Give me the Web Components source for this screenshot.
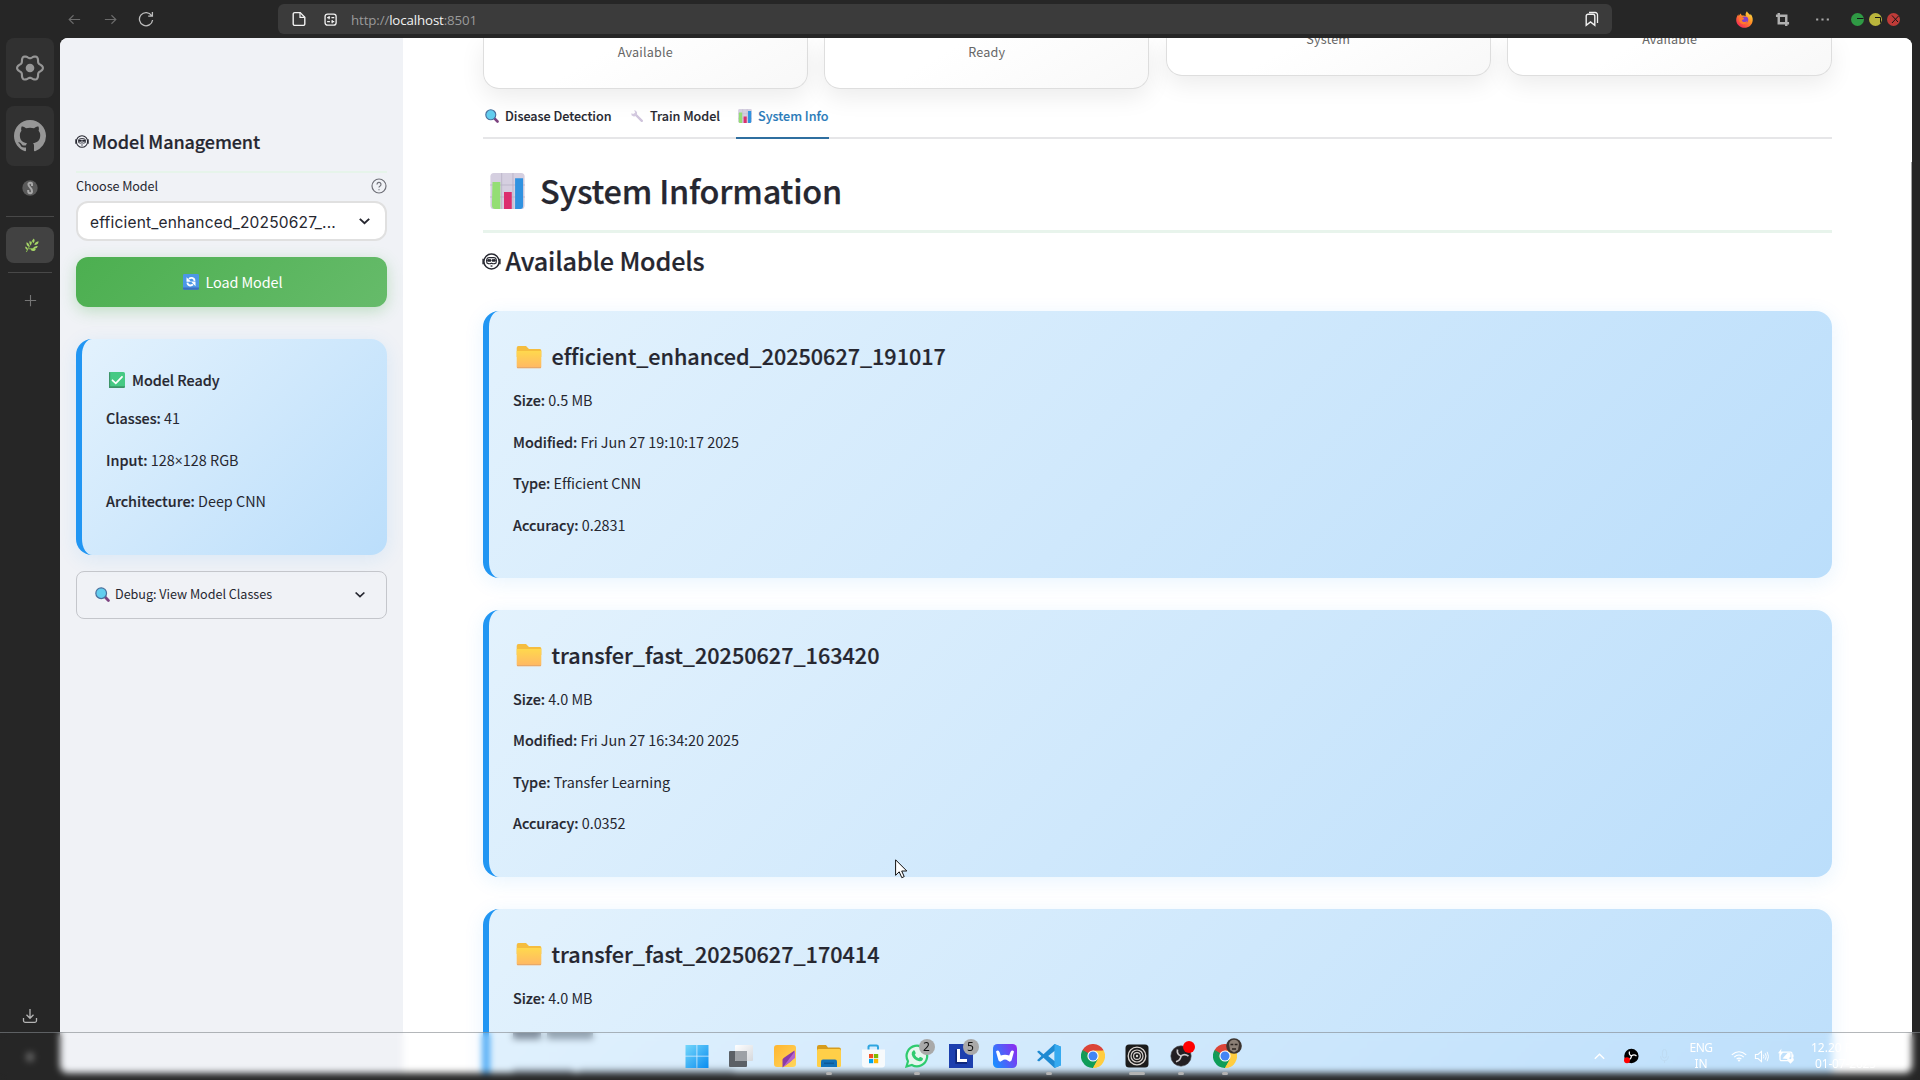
<!DOCTYPE html>
<html lang="en">
<head>
<meta charset="utf-8">
<title>Plant Disease Detection</title>
<style>
html,body{margin:0;height:100%;overflow:hidden;background:#262626}
body{font-family:"Noto Sans CJK SC","Noto Sans",sans-serif;color:#262730;width:1920px;height:1080px;position:relative}
</style>
</head>
<body>
<browser-window></browser-window>
<task-bar></task-bar>
<mouse-pointer></mouse-pointer>
<script>
/* Six-lobed outline of the settings gear. */
const gearPath = 'M' + Array.from({length:72},(_,i)=>{const t=i*Math.PI/36,r=12.1+1.7*Math.cos(6*t);return (16+r*Math.cos(t)).toFixed(2)+' '+(16+r*Math.sin(t)).toFixed(2)}).join('L') + 'z';
const ICONS = {
  back:['0 0 16 16','<path d="M14 8H2.5M7 3.5 2.3 8 7 12.5" fill="none" stroke="#6b6b6b" stroke-width="1.2"/>'],
  fwd:['0 0 16 16','<path d="M2 8h11.5M9 3.5 13.7 8 9 12.5" fill="none" stroke="#6b6b6b" stroke-width="1.2"/>'],
  reload:['0 0 16 16','<path d="M13.6 4.6A6.6 6.6 0 1 0 14.6 9M14.4 1v4.2h-4.2" fill="none" stroke="#bdbdbd" stroke-width="1.3"/>'],
  page:['0 0 16 16','<path d="M3.8 1.6h5.4l4.6 4.6v6.6a1.6 1.6 0 0 1-1.6 1.6H3.8a1.6 1.6 0 0 1-1.6-1.6V3.2a1.6 1.6 0 0 1 1.6-1.6z" fill="none" stroke="#f2f2f2" stroke-width="1.4"/><path d="M9 1.6v4.8h4.8" fill="none" stroke="#f2f2f2" stroke-width="1.2"/>'],
  site:['0 0 16 16','<rect x="2.2" y="2.2" width="11.8" height="11.8" rx="2.6" fill="none" stroke="#f2f2f2" stroke-width="1.4"/><path d="M4.4 6h3M9 6h3M4.4 10.200h3M9 10.200h3M6.500 4.300v3.400M9.800 8.500v3.400" stroke="#f2f2f2" stroke-width="1.300"/>'],
  mark:['0 0 16 16','<path d="M2.200 14.300V5a1.800 1.800 0 0 1 1.800-1.800h5A1.800 1.800 0 0 1 10.800 5v9.300L6.500 11z" fill="none" stroke="#f0f0f0" stroke-width="1.400"/><path d="M5 1.500h6.300a2.200 2.200 0 0 1 2.200 2.200V12" fill="none" stroke="#f0f0f0" stroke-width="1.300"/>'],
  crop:['0 0 16 16','<path d="M4 1v11h11M1 4h11v11" fill="none" stroke="#b0b0b0" stroke-width="2.600"/>'],
  dots:['0 0 16 16','<path d="M2 7h2v2H2zM7 7h2v2H7zM12 7h2v2h-2z" fill="#a8a8a8"/>'],
  fox:['0 0 16 16','<defs><linearGradient id="f" x1="1" y1="0" x2=".2" y2="1"><stop offset="0" stop-color="#fff14f"/><stop offset=".45" stop-color="#ff9324"/><stop offset="1" stop-color="#f5225a"/></linearGradient></defs><path d="M10.300.300c.300 1.300 2.200 2.300 3.200 3.700.200-.4.200-1 .1-1.400 1.500 1.600 2.400 4.200 2.100 6.500-.5 4-3.700 6.700-7.700 6.700S.3 12.600.2 8.700C.1 6.500 1 4.500 2.300 3l.2 1.700c.5-.5 1-1.900 2.200-2.400 0 .7.400 1.600 1 2 1.500-.3 2.500-.3 3.500.6C9 4 8.600 2 10.300.3z" fill="url(#f)"/><circle cx="8.400" cy="8.300" r="3.100" fill="#8440c8"/><path d="M3.300 6c2-.5 3.800.100 4.400 1.200-.3.900-1.600.800-2.200 1.400.5 2.300 3.800 2.500 5.200.3 0 3-4.300 4.700-6.500 2.400C3 10 2.700 7.700 3.300 6z" fill="#ff7a2c"/>'],
  gear:['0 0 32 32',`<path d="${gearPath}" fill="none" stroke="#969696" stroke-width="2.300" stroke-linejoin="round"/><circle cx="16" cy="16" r="4.600" fill="#969696"/>`],
  github:['0 0 16 16','<path fill="#969696" d="M8 0C3.580 0 0 3.580 0 8c0 3.540 2.290 6.530 5.470 7.590.4.070.55-.17.55-.38 0-.19-.01-.82-.01-1.490-2.010.370-2.530-.490-2.690-.940-.090-.230-.480-.940-.820-1.130-.280-.150-.680-.520-.010-.530.630-.010 1.080.580 1.230.820.720 1.210 1.870.870 2.330.660.070-.520.280-.870.510-1.070-1.780-.200-3.640-.890-3.640-3.950 0-.870.310-1.590.820-2.150-.080-.200-.360-1.020.080-2.120 0 0 .670-.210 2.200.820.640-.180 1.320-.270 2-.270s1.360.090 2 .270c1.530-1.040 2.200-.820 2.200-.820.440 1.100.160 1.920.080 2.120.510.560.820 1.270.820 2.150 0 3.070-1.870 3.750-3.650 3.950.290.250.540.730.540 1.480 0 1.070-.010 1.930-.010 2.200 0 .210.150.460.550.380A8.010 8.010 0 0 0 16 8c0-4.420-3.580-8-8-8z"/>'],
  coil:['0 0 16 16','<circle cx="8" cy="8" r="7.700" fill="#5a5a5a"/><path d="M10 6V4.200Q10 2.800 8.200 2.800T6.400 4.300Q6.400 6 8.200 7.500Q10 9.300 10 11.200T8.200 13.200Q6.200 13.200 6.200 11V10" fill="none" stroke="#a8a8a8" stroke-width="2"/>'],
  leaf:['0 0 16 16','<path d="M1.500 15C4 10 7 6 9.500 1.500M4.500 11.500Q9 12 13 9.800" fill="none" stroke="#8fc653" stroke-width="1"/><path d="M9.800.5q2.700 2.300-.5 5Q7.500 3 9.800.5zM15.500 3.500q0 4-4.800 4 .5-3.500 4.800-4zM14.500 8.500q-.6 3.500-5.500 2.800 1.500-3.300 5.500-2.800zM12.500 12.200q-2.500 3.300-6.300.3 3-2.200 6.300-.3zM1.800 4.500Q5.500 6 4.500 9.300 1 8 1.800 4.500zM5.500 3q2.800 2.200 1.300 4.800Q4 6 5.500 3zM.3 9q3 .8 2.800 3.800Q0 12 .3 9z" fill="#a6d667"/>'],
  plus:['0 0 16 16','<path d="M8 2v12M2 8h12" stroke="#757575" stroke-width="1.200"/>'],
  down:['0 0 16 16','<path d="M8 1v9M4.500 6.800 8 10.300l3.500-3.500M1.500 10v2.600a1.800 1.800 0 0 0 1.800 1.800h9.400a1.800 1.800 0 0 0 1.800-1.800V10" fill="none" stroke="#b4b4b4" stroke-width="1.300"/>'],
  help:['0 0 16 16','<circle cx="8" cy="8" r="7" fill="none" stroke="#6f7078" stroke-width="1.200"/><path d="M6 6.400a2 2 0 1 1 2.900 1.800c-.7.350-.9.600-.9 1.400M8 11.200v1.100" fill="none" stroke="#6f7078" stroke-width="1.200"/>'],
  chev:['0 0 16 16','<path d="M3 5.500 8 10.500l5-5" fill="none" stroke="#262730" stroke-width="2"/>'],
  face:['0 0 20 18','<circle cx="10" cy="9" r="8" fill="none" stroke="#262730" stroke-width="1.500"/><path d="M1.200 6v6M18.800 6v6" stroke="#262730" stroke-width="1.600"/><path d="M5.200 10.500Q3.800 5.200 7.500 4.900H12.500Q16.200 5.200 14.800 10.500Q12.300 12 10 10.800Q7.700 12 5.200 10.500z" fill="none" stroke="#262730" stroke-width="1.200"/><path d="M7.600 6.600a1.500 1.500 0 0 1 1.500 2.600H6.100a1.500 1.500 0 0 1 1.500-2.600zM12.400 6.600a1.500 1.500 0 0 1 1.500 2.600h-3a1.500 1.500 0 0 1 1.500-2.600z" fill="#262730"/><path d="M9 13.800h2" stroke="#262730" stroke-width="1.400"/>'],
  mag:['0 0 16 16','<path d="M10.500 10.500 14.300 14.300" stroke="#7d4380" stroke-width="3" stroke-linecap="round"/><circle cx="6.600" cy="6.600" r="5.700" fill="#62cdee" stroke="#4a6f9c" stroke-width="1.300"/>'],
  wrench:['0 0 16 16','<path d="M6 6l7.500 7.500" stroke="#cfc4dc" stroke-width="2.800" stroke-linecap="round"/><path d="M1.500 4.800Q1 7.500 3.500 8.300T8 6.500Q8.800 3.500 6.800 2L4.500 1.500 6 3.800 4.800 5.400 3 5.500z" fill="#d3c9df"/>'],
  chart:['0 0 18 18','<rect x=".2" y="0" width="17.600" height="18" rx="1.800" fill="#d5cfe0"/><path d="M6 0v18M11.800 0v18M0 6h18M0 12h18" stroke="#b6b0c4" stroke-width=".4"/><path d="M1.300 4.500h4V18h-2.600Q1 18 1 16z" fill="#94de74"/><path d="M7.200 9.500h4V18h-4z" fill="#dc2f6e"/><path d="M12.900 2.600H17V16.500Q17 18 15.600 18H12.900z" fill="#3092e0"/>'],
  sync:['0 0 16 16','<rect width="16" height="15.500" rx="1.200" fill="#4c97e6"/><path d="M0 13.500h16v1a1.200 1.200 0 0 1-1.200 1.200H1.200A1.200 1.200 0 0 1 0 14.500z" fill="#3d6fc0"/><path d="M3.500 3.200v4.600h4.600zM12.500 12.200V7.600H7.900z" fill="#fff"/><path d="M6 5Q7 3.800 9 3.900Q11.300 4.200 11.600 6.800M10 10.400Q9 11.600 7 11.500Q4.700 11.200 4.400 8.600" fill="none" stroke="#fff" stroke-width="1.800"/>'],
  check:['0 0 16 16','<rect width="16" height="16" rx="1.600" fill="#46c984"/><path d="M0 14.200h16v.4a1.400 1.400 0 0 1-1.400 1.400H1.400A1.400 1.400 0 0 1 0 14.600z" fill="#3d9468"/><rect width="1.200" height="16" rx=".6" fill="#3d9468"/><path d="M3.500 8.300 6.800 11.300 13 4.800" fill="none" stroke="#fff" stroke-width="1.800" stroke-linecap="round"/>'],
  folder:['0 0 26 24','<defs><linearGradient id="g" x1="0" y1="0" x2="0" y2="1"><stop offset="0" stop-color="#ffd84d"/><stop offset="1" stop-color="#ffb765"/></linearGradient></defs><path d="M.7 3Q.7 1 2.500 1H10L13 4H24Q25.300 4 25.300 5.500V12H.7z" fill="#f5bd3f"/><path d="M.7 6H25.300V21.800Q25.300 23.300 24 23.300H2Q.7 23.300.7 21.800z" fill="url(#g)"/><path d="M1 22.600h24" stroke="#e3a56a" stroke-width=".9"/>'],
  win:['0 0 24 24','<defs><linearGradient id="w" x1="0" y1="0" x2="1" y2="1"><stop offset="0" stop-color="#74d7fb"/><stop offset="1" stop-color="#0a8cf0"/></linearGradient></defs><path d="M.5 1h11v10.800H.5zM12.300 1h11.200v10.800H12.300zM.5 12.600h11V24H.5zM12.300 12.600h11.200V24H12.300z" fill="url(#w)"/>'],
  task:['0 0 24 24','<defs><linearGradient id="t" x1="0" y1="0" x2="1" y2="1"><stop offset="0" stop-color="#fff"/><stop offset="1" stop-color="#d5d8dc"/></linearGradient></defs><rect x="0" y="7" width="18" height="16" rx="1" fill="#5b6066"/><rect x="6" y="1" width="18" height="16" rx="1" fill="url(#t)"/><path d="M6 7h12v10H7a1 1 0 0 1-1-1z" fill="#9da1a6"/>'],
  note:['0 0 24 24','<defs><linearGradient id="n" x1="0" y1="0" x2="1" y2="1"><stop offset="0" stop-color="#ffb52f"/><stop offset="1" stop-color="#ffd65c"/></linearGradient></defs><rect x="1" y="1" width="22" height="22" rx="3" fill="url(#n)"/><path d="M21.500 6.500V10Q21 14.500 17 18L9.500 23.500V15.500Q10 14 12 13z" fill="#8a3ba8"/><path d="M22 7 10 23.200l12-9.200z" fill="#b565cc"/>'],
  files:['0 0 24 24','<path d="M0 3Q0 1 2 1H9L11 3.500H22Q24 3.500 24 5.500V12H0z" fill="#d79c1c"/><rect y="5" width="24" height="18" rx="1.500" fill="#ffcf48"/><path d="M4 23V17.500Q4 15.500 6 15.500H18Q20 15.500 20 17.500V23z" fill="#1272b8"/><path d="M7 18.500h10v1.600H7z" fill="#0d5a99"/>'],
  store:['0 0 24 24','<path d="M7.500 6V3Q7.500 1.600 9 1.600H15.500Q17 1.600 17 3V6" fill="none" stroke="#2ea5e0" stroke-width="2"/><path d="M1 5.500H24V20.500Q24 23.500 21 23.500H4Q1 23.500 1 20.500z" fill="#f7fafc"/><path d="M8 10h4.200v4.200H8z" fill="#f25022"/><path d="M13 10h4.200v4.200H13z" fill="#7fba00"/><path d="M8 15h4.200v4.200H8z" fill="#00a4ef"/><path d="M13 15h4.200v4.200H13z" fill="#ffb900"/>'],
  whats:['0 0 24 24','<path d="M1.500 22.500 3 17.200A10.300 10.300 0 1 1 6.900 21z" fill="#e6f6ee" stroke="#2fcb6f" stroke-width="2.200"/><path d="M8.300 6.500q1.200-.6 1.700.8l.7 1.600q.2.700-.9 1.800 1.300 2.600 3.900 3.600 1.200-1.600 1.900-1.200l2 1q.8.600 0 1.800-1.300 1.800-3.500 1.300Q8 15.500 6.700 10.500 6.300 8 8.300 6.500z" fill="#2fcb6f"/>'],
  lex:['0 0 24 24','<path d="M0 0h24v24H0z" fill="#1c3fae"/><path d="M8 5.500V18H18" fill="none" stroke="#0d2577" stroke-width="3.400"/><path d="M9.500 5V16.500H18" fill="none" stroke="#fff" stroke-width="3"/>'],
  bear:['0 0 24 24','<defs><linearGradient id="b" x1="0" y1=".7" x2="1" y2=".2"><stop offset="0" stop-color="#1d8cff"/><stop offset="1" stop-color="#8a2cf0"/></linearGradient></defs><rect width="24" height="24" rx="4.500" fill="url(#b)"/><path d="M3 7.500Q5 5.500 6.500 8l1.300 3.500Q12 9.800 16.200 11.500L17.500 8Q19 5.500 21 7.500L18.500 16.500Q17 18.600 15 16.800Q12 14 9 16.800Q7 18.600 5.500 16.500z" fill="#fff"/>'],
  code:['0 0 24 24','<path d="M17.500 0 24 2.800V21.200L17.500 24 6.500 13.800 2 17.500 0 16.300 4.400 12 0 7.700 2 6.500 6.500 10.200zM17.800 6.800 11.200 12l6.600 5.200z" fill="#1f8ad2" fill-rule="evenodd"/><path d="M17.500 0 24 2.800V21.200L17.500 24z" fill="#35aaf0"/>'],
  chrome:['0 0 24 24','<path d="M12 12 1.600 6A12 12 0 0 1 22.400 6z" fill="#db4437"/><path d="M12 12 22.400 6A12 12 0 0 1 12 24z" fill="#ffcd40"/><path d="M12 12V24A12 12 0 0 1 1.600 6z" fill="#0f9d58"/><path d="M12 6.500H22.600L17 15 12 12z" fill="#ffcd40"/><path d="M1.600 6H12v6L6.800 14.800z" fill="#db4437"/><path d="M1.700 6 6.900 15 12 12z" fill="#0f9d58"/><path d="M22.500 6.500H12V12z" fill="#ffcd40"/><path d="M12 1Q19 1 22.400 6.500H12z" fill="#db4437"/><path d="M6.900 15 12 17.200 17 15 12 24H11.500z" fill="#0f9d58"/><path d="M17.200 15 12 24A12 12 0 0 0 22.400 18z" fill="#ffcd40"/><circle cx="12" cy="12" r="5.600" fill="#fff"/><circle cx="12" cy="12" r="4.500" fill="#4285f4"/>'],
  rings:['0 0 24 24','<rect x=".5" y=".5" width="23" height="23" rx="3.500" fill="#1b1b1b"/><circle cx="12" cy="12" r="8.800" fill="none" stroke="#d9d3cf" stroke-width="1.300"/><circle cx="12" cy="12" r="6" fill="none" stroke="#d9d3cf" stroke-width="1.200"/><circle cx="12" cy="12" r="3.400" fill="none" stroke="#d9d3cf" stroke-width="1.100"/><circle cx="12" cy="12" r="1.200" fill="#d9d3cf"/>'],
  obs:['0 0 24 24','<circle cx="12" cy="12" r="10.200" fill="#231f22" stroke="#4b484c" stroke-width=".6"/><path d="M12 12Q7.500 10.500 8.500 5.500M12 12Q15.500 9 19.500 12.200M12 12Q11.500 16.500 7 17.800" fill="none" stroke="#c9c6c8" stroke-width="1.700"/>'],
  obss:['0 0 16 16','<circle cx="8.400" cy="8" r="7.200" fill="#000"/><path d="M8.400 8Q5.500 6.500 6.500 3.500M8.400 8Q11 5.800 13.500 8M8.400 8Q8.300 11 5.500 12" fill="none" stroke="#fff" stroke-width="1.200"/><circle cx="4" cy="12.300" r="3" fill="#f00"/>'],
  face2:['0 0 16 16','<circle cx="8" cy="8" r="7.800" fill="#3c342f"/><path d="M3 6Q4 1.800 8 1.800T13 6L12 12 8 14.500 4 12z" fill="#8c8076"/><path d="M4.500 6.500h2.800M8.700 6.500h2.800M6 11h4" stroke="#2b2421" stroke-width="1.400"/>'],
  up:['0 0 16 16','<path d="M3 10.500 8 5.500l5 5" fill="none" stroke="#fff" stroke-width="1.500"/>'],
  mic:['0 0 16 16','<rect x="5.500" y="1.500" width="5" height="8.500" rx="2.500" fill="none" stroke="#b9d2e6"/><path d="M3.200 8q0 4.500 4.800 4.500T12.800 8M8 12.500v2.500" fill="none" stroke="#b9d2e6"/>'],
  wifi:['0 0 16 16','<path d="M.8 6.800Q8-.6 15.200 6.800M3.200 9.300Q8 4.500 12.800 9.300M5.600 11.600Q8 9.300 10.400 11.600" fill="none" stroke="#fff" stroke-width="1.200"/><circle cx="8" cy="13.200" r="1.200" fill="#fff"/>'],
  vol:['0 0 16 16','<path d="M1.500 5.800h2.700L8 2.500v11L4.200 10.200H1.500z" fill="none" stroke="#fff" stroke-width="1.100"/><path d="M10 6q1.200 2 0 4M12 4.500q2.200 3.500 0 7M14 3q3 5 0 10" fill="none" stroke="#fff"/>'],
  batt:['0 0 18 16','<rect x="3" y="4.200" width="12" height="8.500" rx="1.500" fill="none" stroke="#fff" stroke-width="1.300"/><path d="M15 6.500h1.500v3H15zM4.500.5 1 5.300h2.200L2.500 9l4-5H4zM5.500 10.500l5-5.500h3v4l-3 2z" fill="#fff"/><path d="M13.500 15.800 10.200 12.300q-.5-2.200 1.500-2.200l1.800 1.200 1.800-1.200q2 0 1.500 2.200z" fill="#fff"/>']
};

/* Shared base: each element supplies styles and markup for its open shadow root. */
class Base extends HTMLElement {
  constructor(){ super(); this.attachShadow({mode:'open'}); }
  connectedCallback(){ if(!this.shadowRoot.childNodes.length) this.shadowRoot.innerHTML = `<style>*{box-sizing:border-box}:host{display:block;box-sizing:border-box}${this.css()}</style>${this.html()}`; }
  css(){return ''} html(){return '<slot></slot>'}
  a(n,d=''){ return this.getAttribute(n) ?? d; }
}
const def=(n,c)=>customElements.define(n,c);
const ic=(n,w,h,s='')=>`<ui-icon name="${n}" w="${w}" h="${h||w}" style="${s}"></ui-icon>`;

class UiIcon extends Base{
  css(){return `:host{display:inline-block;flex:none;width:${this.a('w')}px;height:${this.a('h')}px}svg{display:block;width:100%;height:100%}`}
  html(){const [v,b]=ICONS[this.a('name')];return `<svg viewBox="${v}" preserveAspectRatio="none">${b}</svg>`}
}

class TopBar extends Base{
  css(){return `
  :host{height:38px;display:flex;padding-left:56px;background:#262626}
  .c{height:38px;width:36px;display:flex;align-items:center;justify-content:center;flex:none}
  .url{width:1334px;height:30px;margin:4px 0 0 114px;background:#3b3b3b;border-radius:6px;display:flex;align-items:center;padding:0 4px 0 5px;font:13.300px/30px "Open Sans",sans-serif;color:#9a9a9a}
  .url .c{width:32px;height:30px}.t{margin:2px 0 0 4px;flex:1}.t b{font-weight:400;color:#f2f2f2}
  .w{width:18px;height:38px;display:flex;align-items:center;justify-content:center;padding-top:1px}
  i{display:flex;width:13px;height:13px;border-radius:50%}svg{width:13px;height:13px}`}
  html(){const dot=(c,p)=>`<span class="w"><i style="background:${c}"><svg viewBox="0 0 13 13"><path d="${p}" fill="none" stroke="#161616" stroke-width="1"/></svg></i></span>`;
  return `<span class="c">${ic('back',15)}</span><span class="c">${ic('fwd',15)}</span><span class="c">${ic('reload',16)}</span>
  <div class="url"><span class="c">${ic('page',16)}</span><span class="c" style="padding-right:1px">${ic('site',15)}</span><span class="t"><fit-text w="126">http://<b>localhost</b>:8501</fit-text></span><span class="c">${ic('mark',16)}</span></div>
  <span class="c" style="width:38px;margin-left:113px">${ic('fox',17)}</span><span class="c" style="width:38px">${ic('crop',15)}</span><span class="c" style="width:42px">${ic('dots',17)}</span>
  <span style="width:5.5px"></span>${dot('#2f9a44','M6 5.500h6.500')}${dot('#b9b53c','M6 4.500h5.500v5M11 9h1.500')}${dot('#bf3b38','M5 2.500l6 6.500M11.500 3l-6.500 7')}`}
}

class SideRail extends Base{
  css(){return `:host{width:60px;display:flex;flex-direction:column;align-items:center;flex:none;background:#262626}
  .t{width:48px;height:60px;border-radius:8px;background:#313131;display:flex;align-items:center;justify-content:center;flex:none}
  hr{border:0;width:48px;height:1px;background:#484848;margin:0;flex:none}`}
  html(){return `<div class="t">${ic('gear',30)}</div><div class="t" style="margin-top:8px">${ic('github',32)}</div>
  ${ic('coil',16,16,'margin-top:14px')}<hr style="margin-top:20px"><div class="t" style="height:36px;margin-top:10px;background:#424242">${ic('leaf',14,15,'margin-left:3px')}</div>
  <hr style="width:44px;margin-top:9px">${ic('plus',15,15,'margin-top:20px')}
  ${ic('down',16,16,'margin-top:700px')}
  <span style="width:6px;height:8px;margin-top:29px;background:#8a8a8a;border-radius:3px"></span>`}
}

class InfoRow extends Base{
  css(){return `:host{height:41.500px;line-height:41.500px;font-size:14.400px;white-space:nowrap}b{font-weight:500;-webkit-text-stroke:.15px}i{font:14px/1 "Open Sans",sans-serif}`}
  html(){return `<fit-text w="${this.a('w')}"><b>${this.a('k')}:</b> ${this.a('v').replace('×','<i>×</i>')}</fit-text>`}
}
class InfoCard extends Base{
  css(){return `:host{border-left:6px solid #2196f3;border-radius:16px;background:linear-gradient(135deg,#e3f2fd,#bbdefb) border-box;box-shadow:0 4px 20px rgba(33,150,243,.1);padding:24px 24px 0;flex:none}`}
}

class ModelSidebar extends Base{
  css(){return `:host{width:343px;background:#f0f2f6;padding:0 16px;flex:none;height:1035px}
  h2{margin:83px 0 0;height:40px;line-height:40px;font-size:18px;font-weight:500;-webkit-text-stroke:.2px;display:flex;align-items:center;gap:3px;margin-left:-1px}
  .g{height:2px;background:#e6f4ea;margin-top:10px}
  .lab{height:28px;line-height:25px;padding-bottom:3px;font-size:12.600px;display:flex;justify-content:space-between;align-items:center}
  .sel{margin-top:0;height:40px;border:2px solid #e0e0e0;border-radius:12px;background:#fff;display:flex;align-items:center;justify-content:space-between;padding:3px 13px 0 12px;font:15.500px/20px Inter,"Liberation Sans",sans-serif}
  .btn{margin-top:16px;height:50px;border-radius:12px;background:linear-gradient(135deg,#4caf50,#66bb6a);box-shadow:0 4px 15px rgba(76,175,80,.3);display:flex;align-items:center;justify-content:center;gap:7px;color:#fff;font-size:14.400px;line-height:48px;padding:0 0 1px 2px}
  info-card{height:216px;margin-top:32px;padding-top:29px}
  .ti{height:24px;line-height:24px;font-size:14.400px;font-weight:500;-webkit-text-stroke:.15px;margin-bottom:5px;display:flex;align-items:center;gap:7px;padding-left:3px}
  .ex{margin-top:16px;height:48px;border:1px solid #c4c6cb;border-radius:8px;display:flex;align-items:center;padding:0 19px 2px 18px;font-size:12.600px;line-height:44px}`}
  html(){return `<h2>${ic('face',14,13)}<fit-text w="168">Model Management</fit-text></h2><div class="g"></div>
  <div class="lab"><fit-text w="82">Choose Model</fit-text>${ic('help',16)}</div>
  <div class="sel"><fit-text w="246">efficient_enhanced_20250627_...</fit-text>${ic('chev',15,14,'margin-top:-4px')}</div>
  <div class="btn">${ic('sync',16)}<fit-text w="77">Load Model</fit-text></div>
  <info-card><div class="ti">${ic('check',16)}<fit-text w="87.500">Model Ready</fit-text></div>
  <info-row k="Classes" v="41" w="74"></info-row><info-row k="Input" v="128×128 RGB" w="132.500"></info-row><info-row k="Architecture" v="Deep CNN" w="160"></info-row></info-card>
  <div class="ex">${ic('mag',15)}<fit-text w="157" style="margin-left:5px">Debug: View Model Classes</fit-text>${ic('chev',14,13,'margin-left:auto')}</div>`}
}

class StatCard extends Base{
  css(){return `:host{flex:1;height:${this.a('h')}px;border:1px solid #dedede;border-top:0;border-radius:0 0 16px 16px;background:linear-gradient(150deg,#fff 35%,#f8f8f8);box-shadow:0 8px 24px rgba(0,0,0,.08);text-align:center;font-size:12.600px;color:#666}
  div{height:24px;line-height:24px;margin-top:${this.a('t')}px}`}
  html(){return `<div><fit-text w="${this.a('w')}"><slot></slot></fit-text></div>`}
}
class TabStrip extends Base{
  css(){return `:host{display:flex;height:50.500px;border-bottom:2px solid #e6e6e8;font-size:12.600px;font-weight:500;-webkit-text-stroke:.12px;width:1349px}
  .t{display:flex;align-items:center;gap:6px;height:50.500px;padding:4px 0 0 2px;margin-right:16.500px}.on{color:#2b7bb9;border-bottom:2px solid #2f6fa0;padding:6px 0 0 2px;width:93px;margin:0 0 0 -.500px}`}
  html(){return `<span class="t">${ic('mag',14)}<fit-text w="106.500">Disease Detection</fit-text></span><span class="t">${ic('wrench',14)}<fit-text w="70">Train Model</fit-text></span><span class="t on">${ic('chart',14)}<fit-text w="70.500">System Info</fit-text></span>`}
}
class ModelCard extends Base{
  css(){return `:host{margin-bottom:32.400px}info-card{height:266.600px}
  h3{margin:0 0 2px;height:42px;line-height:42px;font-size:21.600px;font-weight:500;-webkit-text-stroke:.2px;display:flex;align-items:center;padding-left:3px;gap:9.500px}
  h3 ui-icon{margin-top:1px}
  .b{height:6px;display:flex;gap:6px;margin-top:14.500px}.b span{background:rgba(30,40,55,.55);height:100%}`}
  html(){const g=this.hasAttribute('ghost');return `<info-card><h3>${ic('folder',26,24)}<fit-text w="${this.a('w')}">${this.a('name')}</fit-text></h3>
  <info-row k="Size" v="${this.a('size')}" w="79.500"></info-row>
  ${g?`<div class="b"><span style="width:28px"></span><span style="width:46px;opacity:.8"></span></div><div class="b" style="margin-top:30px"><span style="width:60px;opacity:.7"></span><span style="width:155px;opacity:.5"></span></div>`:`
  <info-row k="Modified" v="${this.a('mod')}" w="226"></info-row><info-row k="Type" v="${this.a('type')}" w="${this.a('tw')}"></info-row><info-row k="Accuracy" v="${this.a('acc')}" w="112.500"></info-row>`}</info-card>`}
}
class MainPane extends Base{
  css(){return `:host{flex:1;height:1035px;overflow:hidden;padding:0 80px;background:#fff}
  .s{display:flex;gap:16.700px;align-items:flex-start}
  h1{margin:11px 0 0;height:79px;line-height:79px;font-size:32.400px;font-weight:500;-webkit-text-stroke:.25px;display:flex;align-items:center;padding-left:6.500px;gap:15.500px}
  h1 ui-icon{margin-top:2px}
  .g{height:3px;background:#e8f4ec;margin-top:1px}
  h2{margin:5px 0 0;height:44px;line-height:44px;font-size:25.200px;font-weight:500;-webkit-text-stroke:.2px;display:flex;align-items:center;gap:4.500px;margin-left:-1px}
  h2 ui-icon{margin-top:2px}
  .l{margin-top:29px}`}
  html(){return `<div class="s"><stat-card h="50.500" t="2" w="55">Available</stat-card><stat-card h="50.500" t="2" w="37">Ready</stat-card><stat-card h="37.500" t="-11" w="44">System</stat-card><stat-card h="37.500" t="-11" w="55">Available</stat-card></div>
  <tab-strip></tab-strip><h1>${ic('chart',35,36)}<fit-text w="302">System Information</fit-text></h1><div class="g"></div>
  <h2>${ic('face',19,17)}<fit-text w="199">Available Models</fit-text></h2>
  <div class="l"><model-card name="efficient_enhanced_20250627_191017" w="394" size="0.5 MB" mod="Fri Jun 27 19:10:17 2025" type="Efficient CNN" tw="128" acc="0.2831"></model-card>
  <model-card name="transfer_fast_20250627_163420" w="328" size="4.0 MB" mod="Fri Jun 27 16:34:20 2025" type="Transfer Learning" tw="157" acc="0.0352"></model-card>
  <model-card name="transfer_fast_20250627_170414" w="328" size="4.0 MB" ghost></model-card></div>`}
}
class BrowserWindow extends Base{
  css(){return `:host{height:1080px;background:#262626}.r{display:flex;height:1035px;width:1912px}
  .p{flex:1;display:flex;border-radius:8px;overflow:hidden;background:#fff;position:relative}
  .sb{position:absolute;right:0;top:124px;width:1px;height:258px;background:#a4a4a4}`}
  html(){return `<top-bar></top-bar><div class="r"><side-rail></side-rail><div class="p"><model-sidebar></model-sidebar><main-pane></main-pane><span class="sb"></span></div></div>`}
}
class TaskApp extends Base{
  css(){return `:host{width:44px;height:47px;display:flex;justify-content:center;align-items:flex-end;padding-bottom:12px;position:relative}
  .r{position:absolute;bottom:5px;height:3px;width:${this.a('run')||0}px;background:#b3b3b3;border-radius:2px}
  .b{position:absolute;left:24px;top:6px;width:16px;height:16px;border-radius:50%;background:#a9a9a9;color:#111;font:12px/16px "Noto Sans",sans-serif;text-align:center}
  .d{position:absolute;left:24px;top:8px;width:12px;height:12px;border-radius:50%;background:#f00}
  .f{position:absolute;left:23px;top:5px}.f ui-icon{display:block}`}
  html(){return ic(this.a('icon'),24)+(this.a('run')?'<span class="r"></span>':'')+(this.a('badge')?`<span class="b">${this.a('badge')}</span>`:'')+(this.hasAttribute('rec')?'<span class="d"></span>':'')+(this.hasAttribute('avatar')?`<span class="f">${ic('face2',16)}</span>`:'')}
}
class TaskBar extends Base{
  css(){return `:host{position:absolute;left:0;top:1032px;width:1920px;height:48px;border-top:1px solid rgba(130,135,140,.6);backdrop-filter:blur(3.500px);display:flex;color:#fff;font:12px/16px "Noto Sans","Open Sans",sans-serif}
  .a{display:flex;margin-left:674.500px}.tr{display:flex;height:46px;margin-left:auto;width:330px;align-items:center}
  .c{display:flex;justify-content:center;flex:none}.k{padding-left:14px}.k div{padding-left:4px}`}
  html(){return `<div class="a"><task-app icon="win"></task-app><task-app icon="task"></task-app><task-app icon="note"></task-app><task-app icon="files" run="6"></task-app><task-app icon="store"></task-app><task-app icon="whats" badge="2" run="6"></task-app><task-app icon="lex" badge="5"></task-app><task-app icon="bear"></task-app><task-app icon="code" run="6"></task-app><task-app icon="chrome"></task-app><task-app icon="rings" run="16"></task-app><task-app icon="obs" rec run="6"></task-app><task-app icon="chrome" avatar run="6"></task-app></div>
  <div class="tr"><span class="c" style="width:18px">${ic('up',15)}</span><span class="c" style="width:46px">${ic('obss',16)}</span><span class="c" style="width:20px">${ic('mic',13,16,'opacity:.5')}</span><span class="c" style="width:54px;text-align:center"><span><fit-text w="23">ENG</fit-text><br>IN</span></span><span class="c" style="width:22px">${ic('wifi',16,14)}</span><span class="c" style="width:22px">${ic('vol',15)}</span><span class="c" style="width:28px">${ic('batt',18,16)}</span>
  <span class="k" style="width:90px;margin-left:-3px">12.20 PM<div><fit-text w="61">01-07-2025</fit-text></div></span></div>`}
}
class MousePointer extends Base{
  css(){return `:host{position:absolute;left:895px;top:859px}svg{display:block}`}
  html(){return `<svg width="13" height="20" viewBox="0 0 13 20"><path d="M.6.8V16.300L4.200 12.800 6.800 18.700 9.200 17.600 6.700 12H11.800z" fill="#fff" stroke="#111" stroke-width="1"/></svg>`}
}
/* Spreads its text over exactly w pixels by adjusting letter spacing. */
class FitText extends Base{
  css(){return ':host{display:inline-block;white-space:nowrap;flex:none}'}
  connectedCallback(){super.connectedCallback();const w=+this.a('w');const n=this.getBoundingClientRect().width;
    const s=this.querySelector('slot');const t=(s?s.assignedNodes().map(x=>x.textContent).join(''):this.textContent).trim().length;
    if(n&&w&&t)this.style.letterSpacing=((w-n)/t).toFixed(4)+'px';}
}
def('browser-window',BrowserWindow);def('top-bar',TopBar);def('side-rail',SideRail);def('model-sidebar',ModelSidebar);def('main-pane',MainPane);
def('stat-card',StatCard);def('tab-strip',TabStrip);def('model-card',ModelCard);def('info-card',InfoCard);def('info-row',InfoRow);
def('task-bar',TaskBar);def('task-app',TaskApp);def('mouse-pointer',MousePointer);def('ui-icon',UiIcon);def('fit-text',FitText);
</script>
</body>
</html>
